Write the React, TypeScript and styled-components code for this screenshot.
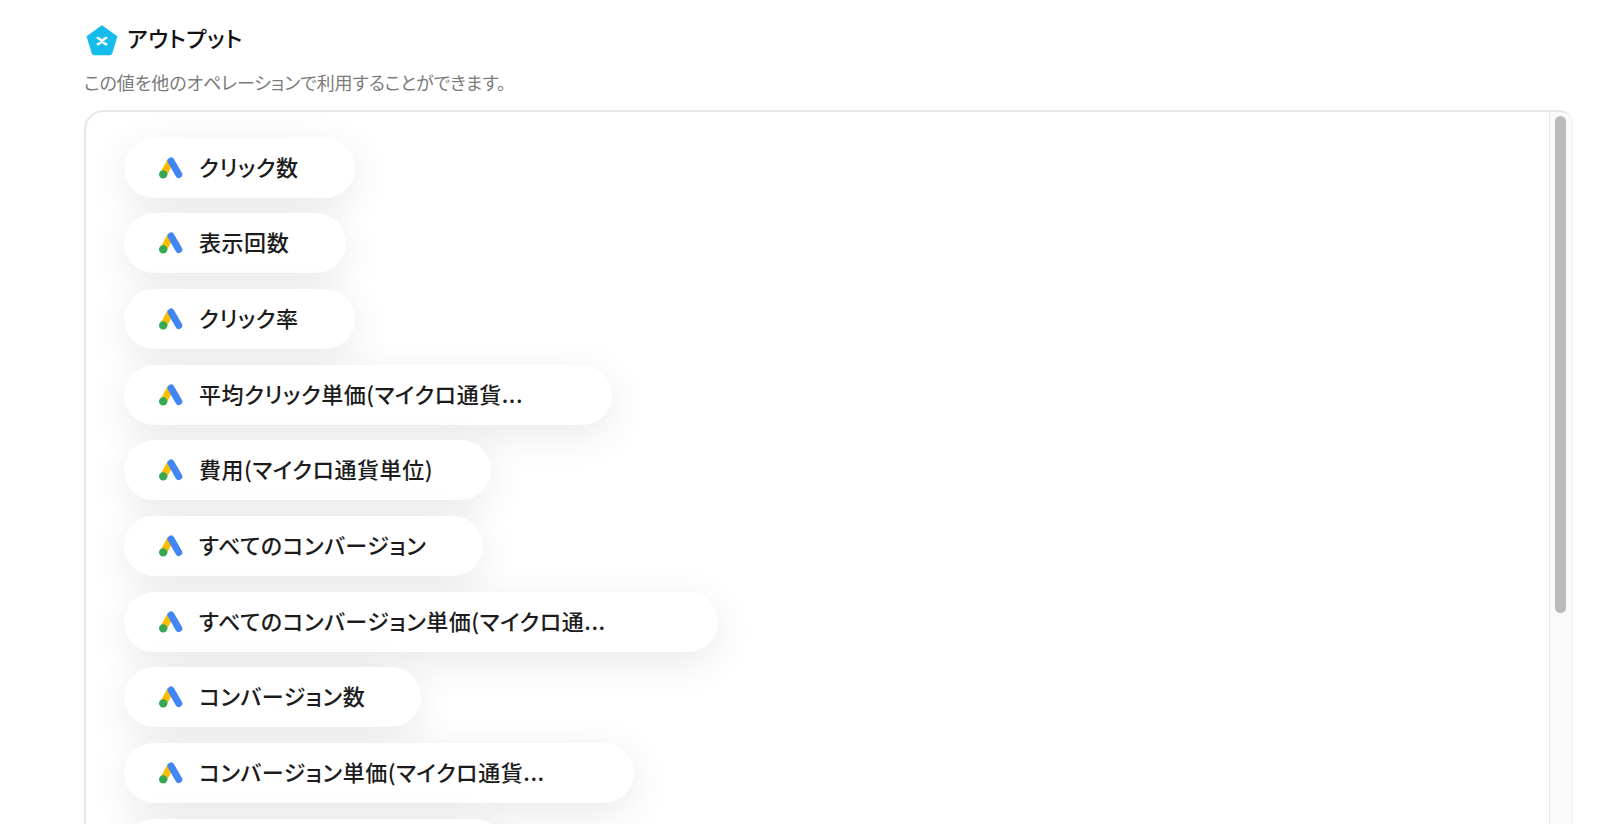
import styled, { createGlobalStyle } from 'styled-components';

const GlobalStyle = createGlobalStyle`
    html, body {
        margin: 0;
        height: 100%;
        overflow: hidden;
        background: #fff;
    }
    body {
        font-family: "Noto Sans CJK JP", "Noto Sans", sans-serif;
        font-feature-settings: "palt";
    }
`;

const Page = styled.div`
    height: 824px;
    padding: 20px 27px 0 84px;
    box-sizing: border-box;
    overflow: hidden;
`;

const Header = styled.div`
    display: flex;
    align-items: center;
    gap: 9px;
    height: 40px;
    padding-left: 2px;
`;

const Title = styled.h2`
    margin: 0 0 6px;
    font-size: 22px;
    font-weight: 500;
    line-height: 36px;
    letter-spacing: 0.7px;
    color: #111;
`;

const Note = styled.p`
    margin: 7px 0 13px;
    font-size: 18px;
    line-height: 30px;
    letter-spacing: -0.07px;
    color: #7b7b7b;
`;

const Panel = styled.div`
    position: relative;
    height: 760px;
    border: 2px solid #e8e8e8;
    border-right: none;
    border-radius: 20px 14px 0 0;
    box-sizing: border-box;
    overflow: hidden;
`;

const ScrollTrack = styled.div`
    position: absolute;
    top: 0;
    right: 0;
    bottom: 0;
    width: 24px;
    box-sizing: border-box;
    padding: 4px 6px 0 5px;
    background: #fafafa;
    border-left: 1px solid #e6e6e6;
    border-right: 1px solid #f0f0f0;
`;

const ScrollThumb = styled.div`
    height: 497px;
    border-radius: 7px;
    background: #bbb;
`;

const List = styled.ul`
    display: flex;
    flex-direction: column;
    align-items: flex-start;
    gap: 15.7px;
    margin: 0;
    padding: 25.6px 0 0 38px;
    list-style: none;
`;

const Pill = styled.li<{ $trail: number }>`
    display: flex;
    align-items: center;
    gap: 16px;
    height: 60px;
    padding: 0 ${(p) => p.$trail}px 0 35px;
    border-radius: 30px;
    background: #fff;
    box-shadow: 0 10px 40px rgba(0, 0, 0, 0.09);
`;

const PillLabel = styled.span`
    padding-bottom: 4px;
    font-size: 22px;
    font-weight: 500;
    line-height: 30px;
    letter-spacing: 0.55px;
    color: #1c1c1c;
    white-space: nowrap;
`;

const outputs = [
    { label: 'クリック数', trail: 56 },
    { label: '表示回数', trail: 57 },
    { label: 'クリック率', trail: 56 },
    { label: '平均クリック単価(マイクロ通貨...', trail: 89 },
    { label: '費用(マイクロ通貨単位)', trail: 58 },
    { label: 'すべてのコンバージョン', trail: 57 },
    { label: 'すべてのコンバージョン単価(マイクロ通...', trail: 112 },
    { label: 'コンバージョン数', trail: 56 },
    { label: 'コンバージョン単価(マイクロ通貨...', trail: 89 },
    // only the top edge of this row is on screen
    { label: '', trail: 346 },
];

function OutputIcon() {
    return (
        <svg width="32" height="32" viewBox="0 0 32 32" aria-hidden="true">
            <path
                d="M16 2 30.6 12.5 25.6 29a2 2 0 0 1-1.9 1.4H8.3a2 2 0 0 1-1.9-1.4L1.4 12.5Z"
                fill="#14bcec"
                stroke="#14bcec"
                strokeWidth="1.5"
                strokeLinejoin="round"
            />
            <path d="M11.8 14c2.6 0 5.8 6.2 8.4 6.2M20.2 14c-2.6 0-5.8 6.2-8.4 6.2" fill="none" stroke="#fff" strokeWidth="2.5" strokeLinecap="round" />
        </svg>
    );
}

function AdsIcon() {
    return (
        <svg width="24" height="22" viewBox="0 0 24 22" aria-hidden="true">
            <path d="M12 3.5 4.5 17" stroke="#fbbc04" strokeWidth="7" />
            <path d="M12 4 19.8 17.5" stroke="#4285f4" strokeWidth="7" strokeLinecap="round" />
            <circle cx="4.2" cy="17.4" r="4.2" fill="#34a853" />
        </svg>
    );
}

export default function App() {
    return (
        <>
            <GlobalStyle />
            <Page>
                <Header>
                    <OutputIcon />
                    <Title>アウトプット</Title>
                </Header>
                <Note>この値を他のオペレーションで利用することができます。</Note>
                <Panel>
                    <List>
                        {outputs.map((item) => (
                            <Pill key={item.label} $trail={item.trail}>
                                {item.label && <AdsIcon />}
                                {item.label && <PillLabel>{item.label}</PillLabel>}
                            </Pill>
                        ))}
                    </List>
                    <ScrollTrack>
                        <ScrollThumb />
                    </ScrollTrack>
                </Panel>
            </Page>
        </>
    );
}
